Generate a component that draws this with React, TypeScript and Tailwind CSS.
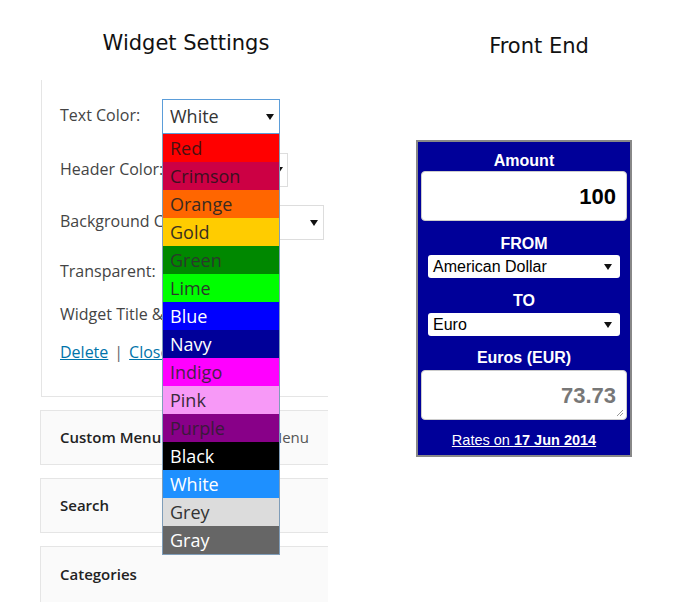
const colors: { name: string; bg: string; text: string }[] = [
  { name: 'Red', bg: 'bg-[#ff0000]', text: 'text-[#4a1010]' },
  { name: 'Crimson', bg: 'bg-[#cc0044]', text: 'text-[#3d1020]' },
  { name: 'Orange', bg: 'bg-[#ff6600]', text: 'text-[#3a2a20]' },
  { name: 'Gold', bg: 'bg-[#ffcc00]', text: 'text-[#3a3020]' },
  { name: 'Green', bg: 'bg-[#008800]', text: 'text-[#2a3a2a]' },
  { name: 'Lime', bg: 'bg-[#00ff00]', text: 'text-[#2a3a2a]' },
  { name: 'Blue', bg: 'bg-[#0000ff]', text: 'text-white' },
  { name: 'Navy', bg: 'bg-[#000099]', text: 'text-white' },
  { name: 'Indigo', bg: 'bg-[#ff00ff]', text: 'text-[#4a204a]' },
  { name: 'Pink', bg: 'bg-[#f799f7]', text: 'text-[#3a2a3a]' },
  { name: 'Purple', bg: 'bg-[#880088]', text: 'text-[#3a1a3a]' },
  { name: 'Black', bg: 'bg-black', text: 'text-white' },
  { name: 'White', bg: 'bg-[#1e90ff]', text: 'text-white' },
  { name: 'Grey', bg: 'bg-[#dcdcdc]', text: 'text-[#333]' },
  { name: 'Gray', bg: 'bg-[#666666]', text: 'text-white' },
]

function Caret() {
  return (
    <svg width="8" height="8" viewBox="0 0 8 8" className="shrink-0">
      <path d="M0 1h8L4 7z" fill="#111" />
    </svg>
  )
}

function WidgetSettings() {
  return (
    <div className="ml-[40px] w-[288px] overflow-hidden font-['Open_Sans',sans-serif]">
      <div className="h-[80px] pt-[31px] pl-[4px] text-center font-['DejaVu_Sans',sans-serif] text-[21px] leading-[24px] text-[#111]">
        Widget Settings
      </div>

      <div className="relative ml-[1px] h-[317px] border-l border-b border-[#e5e5e5] bg-white pl-[18px] pt-[19px] text-[16px] text-[#444]">
        <div className="flex h-[35px] items-center">
          <span className="w-[102px] pb-[3px]">Text Color:</span>
          <div className="flex h-[35px] w-[118px] items-center justify-between border border-[#5b9dd9] pl-[7px] pr-[5px] text-[18px] text-[#333]">
            White
            <Caret />
          </div>
        </div>

        <div className="mt-[19px] flex h-[34px] items-center">
          <span className="w-[116px] pb-[3px]">Header Color:</span>
          <div className="flex h-[34px] w-[112px] items-center justify-end border border-[#ddd] pr-[4px]">
            <Caret />
          </div>
        </div>

        <div className="mt-[18px] flex h-[35px] items-center">
          <span className="w-[142px] pb-[3px]">Background Color:</span>
          <div className="flex h-[35px] w-[122px] items-center justify-end border border-[#ddd] pr-[5px]">
            <Caret />
          </div>
        </div>

        <div className="mt-[19px] flex h-[24px] items-center">
          <span>Transparent:</span>
          <span className="ml-[6px] h-[16px] w-[16px] border border-[#bbb]" />
        </div>

        <div className="mt-[19px] flex h-[24px] items-center">
          <span>Widget Title &amp; Link:</span>
        </div>

        <div className="mt-[14px] flex h-[24px] items-center">
          <a className="text-[#0073aa] underline">Delete</a>
          <span className="mx-[6px] text-[#666]">|</span>
          <a className="text-[#0073aa] underline">Close</a>
        </div>

        {/* open dropdown list of the Text Color select */}
        <div className="absolute left-[120px] top-[54px] w-[118px] border border-t-0 border-[#7f9db9] text-[18px] leading-[28px]">
          {colors.map((c) => (
            <div key={c.name} className={`h-[28px] pl-[7px] ${c.bg} ${c.text}`}>
              {c.name}
            </div>
          ))}
        </div>
      </div>

      <div className="mt-[13px] flex h-[55px] items-center border border-r-0 border-[#e5e5e5] bg-[#fafafa] pl-[19px] pr-[19px] text-[15px] whitespace-nowrap">
        <span className="font-semibold text-[#222]">Custom Menu</span>
        <span className="ml-auto text-[#555]">: Main Menu</span>
      </div>
      <div className="mt-[13px] flex h-[55px] items-center border border-r-0 border-[#e5e5e5] bg-[#fafafa] pl-[19px] text-[15px]">
        <span className="font-semibold text-[#222]">Search</span>
      </div>
      <div className="mt-[13px] flex h-[56px] items-center border border-r-0 border-b-0 border-[#e5e5e5] bg-[#fafafa] pl-[19px] text-[15px]">
        <span className="font-semibold text-[#222]">Categories</span>
      </div>
    </div>
  )
}

function SelectBox({ value }: { value: string }) {
  return (
    <div className="mx-auto flex h-[23px] w-[192px] items-center justify-between rounded-[3px] bg-white pl-[5px] pr-[8px] text-[16px] leading-[23px] text-black">
      {value}
      <Caret />
    </div>
  )
}

function FrontEnd() {
  return (
    <div className="ml-[88px] w-[216px] font-['Liberation_Sans',Arial,sans-serif]">
      <div className="pt-[34px] pl-[30px] text-center font-['DejaVu_Sans',sans-serif] text-[21px] leading-[24px] text-[#111]">
        Front End
      </div>
      <div className="mt-[82px] border-2 border-[#888] bg-[#000099] text-white">
        <div className="h-[29px] pt-[9px] text-center text-[16px] font-bold leading-[20px]">Amount</div>
        <div className="mx-[3px] flex h-[50px] items-center justify-end rounded-[4px] border border-[#ccc] bg-white pr-[10px] text-[22px] font-bold text-black">
          100
        </div>
        <div className="h-[34px] pt-[13px] text-center text-[16px] font-bold leading-[20px]">FROM</div>
        <SelectBox value="American Dollar" />
        <div className="h-[35px] pt-[13px] text-center text-[16px] font-bold leading-[20px]">TO</div>
        <SelectBox value="Euro" />
        <div className="h-[34px] pt-[12px] text-center text-[16px] font-bold leading-[20px]">Euros (EUR)</div>
        <div className="relative mx-[3px] flex h-[50px] items-center justify-end rounded-[4px] border border-[#ccc] bg-white pr-[10px] text-[22px] font-bold text-[#777]">
          73.73
          <svg width="8" height="8" viewBox="0 0 8 8" className="absolute right-[2px] bottom-[2px]">
            <path d="M7 1L1 7M7 4L4 7" stroke="#999" strokeWidth="1" />
          </svg>
        </div>
        <div className="h-[35px] pt-[10px] text-center text-[14.5px] leading-[20px]">
          <a className="underline">
            Rates on <b>17 Jun 2014</b>
          </a>
        </div>
      </div>
    </div>
  )
}

export default function App() {
  return (
    <div className="flex h-[603px] w-[700px] overflow-hidden bg-white">
      <WidgetSettings />
      <FrontEnd />
    </div>
  )
}
